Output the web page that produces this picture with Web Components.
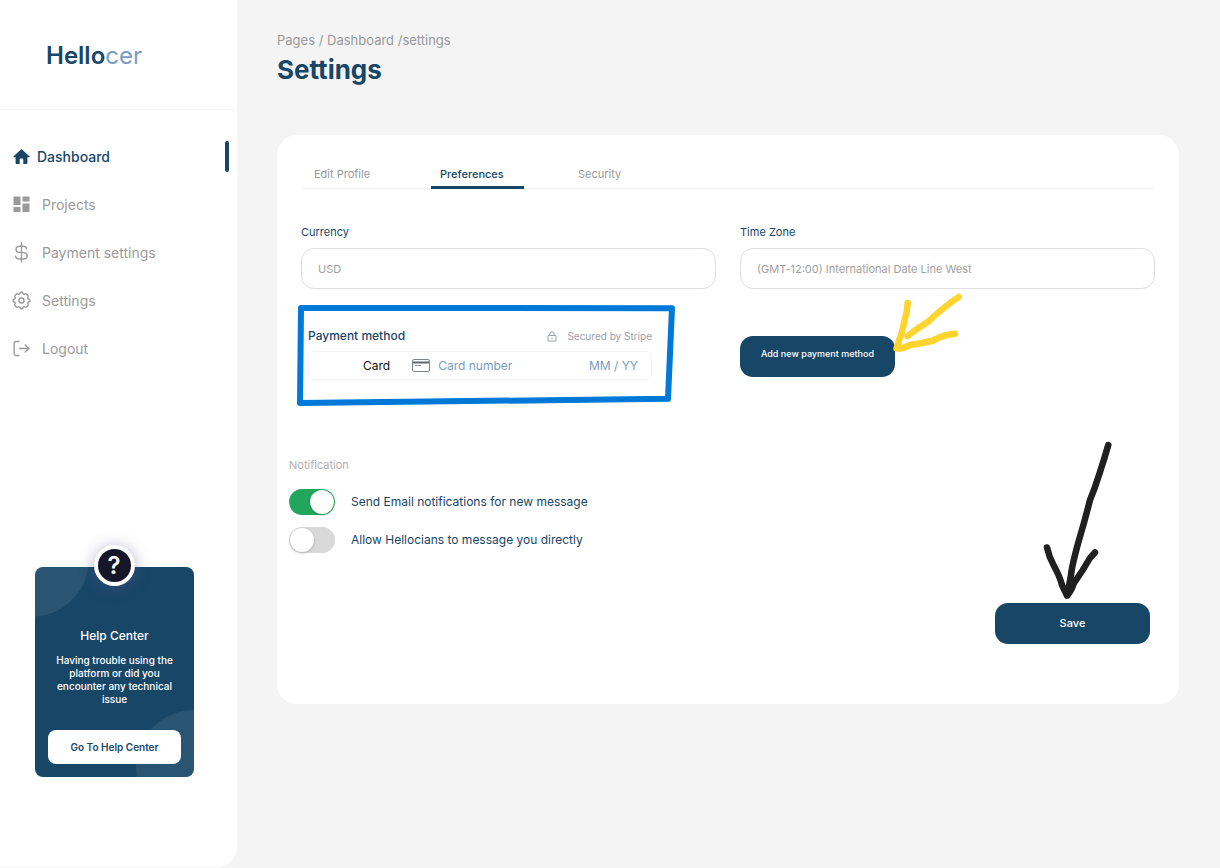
<!DOCTYPE html>
<html lang="en">
<head>
<meta charset="utf-8">
<meta name="viewport" content="width=device-width, initial-scale=1">
<title>Hellocer – Settings</title>
<style>
  :root {
    --navy: #174667;
    --sky: #7a9cc2;
    --muted: #9a9a9a;
    --page: #f4f4f4;
    --line: #dedede;
  }
  html, body { margin: 0; }
  body { background: var(--page); font-family: Inter, "Noto Sans", sans-serif; font-size: 12px; color: var(--navy); }
</style>
</head>
<body>
<hc-app>
  <hc-sidebar slot="side">
    <hc-nav-item icon="home" active>Dashboard</hc-nav-item>
    <hc-nav-item icon="projects">Projects</hc-nav-item>
    <hc-nav-item icon="dollar">Payment settings</hc-nav-item>
    <hc-nav-item icon="gear">Settings</hc-nav-item>
    <hc-nav-item icon="logout">Logout</hc-nav-item>
    <hc-help-card slot="foot"></hc-help-card>
  </hc-sidebar>
  <hc-page-header heading="Settings">Pages / Dashboard /settings</hc-page-header>
  <hc-panel>
    <hc-tabs></hc-tabs>
    <hc-columns>
      <hc-field label="Currency" hint="USD"></hc-field>
      <hc-field label="Time Zone" hint="(GMT-12:00) International Date Line West"></hc-field>
      <hc-payment></hc-payment>
      <hc-add-method></hc-add-method>
    </hc-columns>
    <hc-notifications>
      <hc-toggle on>Send Email notifications for new message</hc-toggle>
      <hc-toggle>Allow Hellocians to message you directly</hc-toggle>
    </hc-notifications>
    <hc-save></hc-save>
  </hc-panel>
</hc-app>

<script>
const define = (name, render) => customElements.define(name, class extends HTMLElement {
  constructor() { super(); this.attachShadow({ mode: "open" }); }
  connectedCallback() {
    const t = document.createElement("template");
    t.innerHTML = "<style>*{box-sizing:border-box}:host{display:block;box-sizing:border-box}</style>" + render(this);
    this.shadowRoot.replaceChildren(t.content.cloneNode(true));
  }
});

define("hc-app", () => `
  <style>
    :host { display: grid; grid-template-columns: 237px minmax(0, 1fr); min-height: 100vh; }
    main { padding: 30px 41px 40px 40px; min-width: 0; }
  </style>
  <slot name="side"></slot>
  <main><slot></slot></main>`);

define("hc-sidebar", () => `
  <style>
    :host { display: flex; flex-direction: column; background: #fff; border-bottom-right-radius: 20px; margin-bottom: 1px; }
    .logo { height: 110px; display: flex; align-items: center; padding: 2px 0 0 46px; border-bottom: 1px solid #f4f6fa;
      font-size: 24px; color: var(--sky); text-decoration: none; }
    b { font-weight: 600; color: var(--navy); }
    nav { padding-top: 22px; }
    .foot { margin-top: auto; padding: 40px 43px 90px 35px; }
  </style>
  <a class="logo" href="#"><span><b>Hello</b>cer</span></a>
  <nav aria-label="Main"><slot></slot></nav>
  <div class="foot"><slot name="foot"></slot></div>`);

const icons = {
  home: `<path fill="currentColor" d="M8.500 1 .6 8.300c-.4.400-.2.900.4.900h1.600V15c0 .6.300.900.900.900h3.200v-4.500c0-.5.300-.8.800-.8h2c.5 0 .8.300.8.800v4.500h3.200c.6 0 .9-.3.900-.9V9.200H16c.6 0 .8-.5.400-.9z"/>`,
  projects: `<path fill="currentColor" d="M0.500.500h7v8.500h-7zM0.500 11h7v5h-7zM9.500.500h7v5h-7zM9.500 7.500h7V16h-7z"/>`,
  dollar: `<path fill="none" stroke="currentColor" stroke-width="1.400" stroke-linecap="round" d="M8.500-1v19M13.500 4.800C13.300 3 12 2.200 10 2.200H6.800C4.500 2.200 3 3.500 3 5.300s1.300 3 3.500 3.100l4 .2c2.200.1 3.700 1.300 3.700 3.200s-1.600 3.200-3.900 3.200H6.500c-2.200 0-3.700-1-3.900-2.900"/>`,
  gear: `<path fill="none" stroke="currentColor" stroke-width="1.400" stroke-linejoin="round" d="M8.500 0c.9 0 1.300.4 1.500 1.300.2.800.9 1.200 1.700.8.900-.5 1.500-.5 2.100.1l1 1c.6.600.6 1.200.100 2.100-.4.800-.1 1.500.8 1.700.9.200 1.300.7 1.300 1.500s-.4 1.300-1.300 1.500c-.9.200-1.200.9-.8 1.700.5.900.5 1.500-.1 2.100l-1 1c-.6.600-1.200.6-2.100.1-.8-.4-1.500 0-1.700.8-.2.900-.6 1.300-1.500 1.300s-1.300-.4-1.500-1.300c-.2-.8-.9-1.200-1.700-.8-.9.500-1.500.5-2.100-.1l-1-1c-.6-.6-.6-1.200-.1-2.100.4-.8.100-1.500-.8-1.700C.4 9.800 0 9.300 0 8.500S.4 7.200 1.300 7c.9-.2 1.200-.9.8-1.700-.5-.9-.5-1.500.1-2.100l1-1c.6-.6 1.200-.6 2.100-.1.800.4 1.500 0 1.700-.8C7.200.4 7.600 0 8.500 0z"/><circle cx="8.500" cy="8.500" r="2.500" fill="none" stroke="currentColor" stroke-width="1.400"/>`,
  logout: `<path fill="none" stroke="currentColor" stroke-width="1.400" stroke-linecap="round" stroke-linejoin="round" d="M6 1.500H3C1.800 1.500 1.200 2 1.200 3.200v10.600c0 1.200.6 1.700 1.800 1.700h3M6.500 8.500h9.300M12.200 5l3.600 3.500-3.600 3.500"/>`
};

define("hc-nav-item", el => `
  <style>
    a { display: flex; align-items: center; height: 48px; padding: 0 8px 0 13px; gap: 12px;
      color: var(--muted); font-size: 14px; text-decoration: none; }
    svg { width: 17px; height: 17px; flex: none; overflow: visible; }
    :host([active]) a { color: var(--navy); font-weight: 500; gap: 7px; }
    :host([active]) a::after { content: ""; width: 4px; height: 31px; border-radius: 2px; background: var(--navy); margin-left: auto; }
  </style>
  <a href="#" ${el.hasAttribute("active") ? 'aria-current="page"' : ""}>
    <svg viewBox="0 0 17 17" aria-hidden="true">${icons[el.getAttribute("icon")]}</svg><slot></slot>
  </a>`);

define("hc-help-card", () => `
  <style>
    :host { position: relative; }
    section { position: relative; overflow: hidden; border-radius: 8px; background: var(--navy); color: #fff;
      padding: 60px 13px 13px; text-align: center; }
    section::before, section::after { content: ""; position: absolute; width: 116px; height: 116px; border-radius: 50%;
      background: #ffffff14; }
    section::before { left: -62px; top: -66px; }
    section::after { right: -58px; bottom: -49px; }
    h2 { margin: 0; font-size: 12px; line-height: 18px; font-weight: 500; }
    p { margin: 9px 0 24px; font-size: 10px; line-height: 13px; font-weight: 500; }
    button { position: relative; z-index: 1; width: 100%; height: 34px; border: 0; border-radius: 8px; background: #fff;
      color: var(--navy); font: inherit; font-size: 10px; font-weight: 600; padding: 0; }
    .badge { position: absolute; z-index: 2; top: -22px; left: 50%; margin-left: -21px; width: 41px; height: 41px; border-radius: 50%;
      border: 4px solid #fff; background: #151628; box-shadow: 0 2px 16px #5a4f8a77; color: #fff;
      display: flex; align-items: center; justify-content: center; font-size: 24px; font-weight: 600; }
  </style>
  <section>
    <h2>Help Center</h2>
    <p>Having trouble using the platform or did you encounter any technical issue</p>
    <button type="button">Go To Help Center</button>
  </section>
  <div class="badge">?</div>`);

define("hc-page-header", el => `
  <style>
    :host { height: 105px; }
    nav { font-size: 13px; line-height: 20px; color: var(--muted); }
    h1 { margin: 4px 0 0; font-size: 26px; line-height: 32px; font-weight: 700; }
  </style>
  <nav aria-label="Breadcrumb"><slot></slot></nav>
  <h1>${el.getAttribute("heading")}</h1>`);

define("hc-panel", () => `
  <style>:host { background: #fff; border-radius: 20px; padding: 24px 24px 60px; }</style>
  <slot></slot>`);

define("hc-tabs", () => `
  <style>
    div { display: flex; border-bottom: 1px solid #f6f6f6; height: 30px; gap: 45px; margin-bottom: 34px; }
    button { border: 0; background: none; font: inherit; font-size: 11px; color: var(--muted); height: 30px;
      padding: 3px 9px 0; text-align: left; border-bottom: 3px solid transparent; border-radius: 2px 2px 0 0; min-width: 93px; }
    button:first-child { padding-left: 13px; min-width: 85px; }
    button[aria-selected=true] { color: var(--navy); font-weight: 500; border-color: var(--navy); }
  </style>
  <div role="tablist">
    <button type="button" role="tab" aria-selected="false">Edit Profile</button>
    <button type="button" role="tab" aria-selected="true">Preferences</button>
    <button type="button" role="tab" aria-selected="false">Security</button>
  </div>`);

define("hc-columns", () => `
  <style>:host { display: grid; grid-template-columns: repeat(2, minmax(0, 1fr)); column-gap: 24px; }</style>
  <slot></slot>`);

define("hc-field", el => `
  <style>
    label { display: block; font-size: 11px; line-height: 18px; margin-bottom: 7px; }
    input { display: block; width: 100%; height: 41px; border: 1px solid var(--line); border-radius: 13px; background: #fff;
      padding: 0 16px; font: inherit; font-size: 11px; color: var(--navy); }
    input::placeholder { color: #a0a0a0; opacity: 1; }
  </style>
  <label for="f">${el.getAttribute("label")}</label>
  <input id="f" type="text" placeholder="${el.getAttribute("hint")}">`);

define("hc-payment", () => `
  <style>
    :host { position: relative; padding: 38px 64px 0 7px; }
    .head { display: flex; align-items: center; line-height: 18px; }
    h2 { margin: 0; font-size: 12px; font-weight: 500; }
    .secure { margin-left: auto; display: flex; align-items: center; gap: 10px; color: #99a0ab; font-size: 10px; }
    .card { display: flex; align-items: center; height: 29px; margin-top: 6px; border: 1px solid #f4f4f4; border-radius: 6px;
      padding: 0 13px 0 54px; }
    label { color: #111; font-size: 12px; }
    .card svg { flex: none; margin: 0 8px 0 22px; }
    input { border: 0; padding: 0; background: none; font: inherit; font-size: 12px; min-width: 0; }
    #num { flex: 1; }
    #exp { width: 50px; text-align: right; }
    input::placeholder { color: var(--sky); opacity: 1; }
    .frame { position: absolute; left: -4px; top: 15px; overflow: visible; pointer-events: none; }
  </style>
  <div class="head">
    <h2>Payment method</h2>
    <span class="secure">
      <svg width="10" height="11" viewBox="0 0 10 11" fill="none" stroke="currentColor" aria-hidden="true"><rect x="1" y="4.500" width="8" height="5.500" rx=".5"/><path d="M2.800 4.500V3a2.200 2.200 0 0 1 4.400 0v1.500M5 6.500v1.500"/></svg>
      Secured by Stripe
    </span>
  </div>
  <div class="card">
    <label for="num">Card</label>
    <svg width="18" height="13" viewBox="0 0 18 13" aria-hidden="true"><rect x=".5" y=".5" width="17" height="12" rx="1.500" fill="#fff" stroke="#7d828b"/><path d="M1 3.500h16" stroke="#5f646d" stroke-width="2"/><path d="M3 6.500h6" stroke="#8d929b"/></svg>
    <input id="num" type="text" placeholder="Card number">
    <input id="exp" type="text" placeholder="MM / YY" aria-label="Expiry date">
  </div>
  <svg class="frame" width="378" height="102" viewBox="0 0 378 102" aria-hidden="true"><path d="M4 4 375 4.200 371 94.800 3 99z" fill="none" stroke="#0078d7" stroke-width="6" stroke-linejoin="round"/></svg>`);

define("hc-add-method", () => `
  <style>
    :host { padding-top: 47px; }
    .wrap { position: relative; width: 155px; }
    button { display: block; width: 100%; height: 41px; border: 0; border-radius: 13px; background: var(--navy); color: #fff;
      font: inherit; font-size: 9px; font-weight: 500; padding: 0 0 6px; }
    svg { position: absolute; left: 150px; top: -46px; overflow: visible; pointer-events: none; }
  </style>
  <div class="wrap">
    <button type="button">Add new payment method</button>
    <svg width="74" height="66" viewBox="890 290 74 66" fill="none" stroke="#ffd42f" stroke-width="6.500" stroke-linecap="round" stroke-linejoin="round" aria-hidden="true">
      <path d="M907.700 303Q907 313 904.500 320Q902 334 899.500 339L896.500 348.500Q902 349 910 345Q922 343.500 933 340.500Q942 336 947 335L955 333.700"/>
      <path d="M958.700 297Q952 301 944 308Q936 314 929 321Q918 328 907.500 336"/>
    </svg>
  </div>`);

define("hc-notifications", () => `
  <style>
    :host { padding-top: 76px; margin-left: -12px; }
    fieldset { border: 0; margin: 0; padding: 0; }
    legend { padding: 0; font-size: 11px; line-height: 18px; color: #b0b0b0; margin-bottom: 15px; }
    div { display: grid; gap: 12px; justify-items: start; }
  </style>
  <fieldset><legend>Notification</legend><div><slot></slot></div></fieldset>`);

define("hc-toggle", el => `
  <style>
    label { display: flex; align-items: center; gap: 16px; font-size: 12px; line-height: 26px; }
    input { appearance: none; width: 46px; height: 26px; margin: 0; border-radius: 13px; background: #d9d9d9; padding: 1px; display: flex; flex: none; }
    input::before { content: ""; width: 24px; height: 24px; border-radius: 50%; background: #fff; box-shadow: 0 1px 3px #0003; }
    input:checked { background: #21a75d; justify-content: flex-end; }
  </style>
  <label><input type="checkbox" ${el.hasAttribute("on") ? "checked" : ""}><slot></slot></label>`);

define("hc-save", () => `
  <style>
    :host { display: flex; justify-content: flex-end; padding: 50px 5px 0 0; }
    .wrap { position: relative; width: 155px; }
    button { display: block; width: 100%; height: 41px; border: 0; border-radius: 13px; background: var(--navy); color: #fff;
      font: inherit; font-size: 11px; font-weight: 500; padding: 0 0 2px; }
    svg { position: absolute; left: 45px; top: -163px; overflow: visible; pointer-events: none; }
  </style>
  <div class="wrap">
    <button type="button">Save</button>
    <svg width="72" height="160" viewBox="1040 440 72 160" fill="none" stroke="#202020" stroke-width="6.500" stroke-linecap="round" stroke-linejoin="round" aria-hidden="true">
      <path d="M1108.300 445Q1104 460 1099 475Q1095 488 1090 500Q1085 520 1079 540Q1072 565 1071 575L1067.300 595"/>
      <path d="M1047 547.500Q1049 557 1054 566Q1060 577 1062 585L1067 595.500Q1071 592 1074 583Q1082 572 1090 558L1095 552.500"/>
    </svg>
  </div>`);
</script>
</body>
</html>
